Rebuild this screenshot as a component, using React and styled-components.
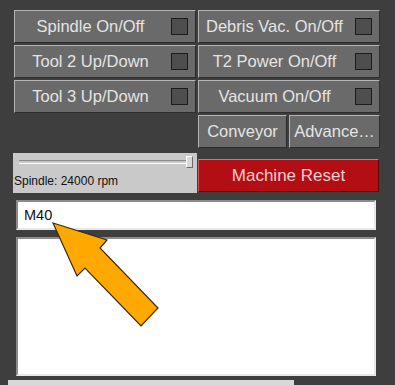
import React from 'react'
import styled, { createGlobalStyle } from 'styled-components'

const GlobalStyle = createGlobalStyle`
  html, body {
    margin: 0;
    padding: 0;
    background: #3e3e3e;
    width: 395px;
    height: 385px;
    overflow: hidden;
  }
`;

const Panel = styled.div`
  position: relative;
  width: 395px;
  height: 385px;
  box-sizing: border-box;
  padding: 10px 0 0 14px;
  background: #3e3e3e;
  font-family: 'Liberation Sans', Arial, sans-serif;
`;

const ButtonGrid = styled.div`
  display: grid;
  grid-template-columns: 182px 182px;
  grid-auto-rows: 33px;
  column-gap: 2px;
  row-gap: 2px;
`;

const Btn = styled.div`
  box-sizing: border-box;
  display: flex;
  align-items: center;
  justify-content: center;
  gap: ${p => (p.$check ? '6px' : '0')};
  padding: 0 ${p => (p.$check ? '7px' : '1px')} 0 1px;
  background: #6a6a6a;
  border: 1px solid;
  border-color: #b4b4b4 #2c2c2c #2c2c2c #b4b4b4;
  color: #e4e4e4;
  font-size: 16.5px;
  white-space: nowrap;
  overflow: hidden;
`;

const BtnLabel = styled.span`
  flex: 1;
  text-align: center;
`;

const Check = styled.span`
  flex: none;
  width: 15px;
  height: 15px;
  background: #4e4e4e;
  border: 1px solid #1c1c1c;
`;

const Spacer = styled.div``;

const SplitRow = styled.div`
  display: grid;
  grid-template-columns: 89px 91px;
  gap: 2px;
`;

const ControlRow = styled.div`
  display: grid;
  grid-template-columns: 184px 181px;
  gap: 1px;
  margin: 5px 0 0 -1px;
  align-items: start;
`;

const SliderBox = styled.div`
  height: 40px;
  background: #c9c9c9;
  position: relative;
  box-sizing: border-box;
  padding-top: 3px;
`;

const Track = styled.div`
  position: relative;
  margin: 4px 6px 0 6px;
  height: 2px;
  border-top: 1px solid #8a8a8a;
  border-bottom: 1px solid #ffffff;
`;

const Thumb = styled.div`
  position: absolute;
  right: -2px;
  top: -5px;
  width: 5px;
  height: 10px;
  background: #d8d8d8;
  border: 1px solid;
  border-color: #fff #6a6a6a #6a6a6a #fff;
`;

const SliderLabel = styled.div`
  margin: 10px 0 0 1px;
  font-size: 12px;
  color: #111;
`;

const ResetBtn = styled.div`
  box-sizing: border-box;
  height: 33px;
  margin-top: 6px;
  background: #b20e14;
  border: 1px solid;
  border-color: #e07070 #4a0a0a #4a0a0a #d05050;
  color: #f3cfcf;
  font-size: 17px;
  display: flex;
  align-items: center;
  justify-content: center;
`;

const Field = styled.div`
  box-sizing: border-box;
  width: 360px;
  margin: 7px 0 0 2px;
  background: #ffffff;
  border: 2px solid;
  border-color: #8c8c8c #e8e8e8 #e8e8e8 #8c8c8c;
  color: #111;
  font-size: 14.5px;
  height: ${p => p.$h}px;
  padding: 5px 0 0 6px;
`;

const Scrollbar = styled.div`
  position: absolute;
  left: 8px;
  bottom: 0;
  width: 286px;
  height: 5px;
  background: #d8d8d8;
`;

const ArrowLayer = styled.svg`
  position: absolute;
  left: 0;
  top: 0;
  pointer-events: none;
`;

const buttons = [
  'Spindle On/Off',
  'Debris Vac. On/Off',
  'Tool 2 Up/Down',
  'T2 Power On/Off',
  'Tool 3 Up/Down',
  'Vacuum On/Off',
];

export default function App() {
  return (
    <Panel>
      <GlobalStyle />
      <ButtonGrid>
        {buttons.map(label => (
          <Btn key={label} $check>
            <BtnLabel>{label}</BtnLabel>
            <Check />
          </Btn>
        ))}
        <Spacer />
        <SplitRow>
          <Btn><BtnLabel>Conveyor</BtnLabel></Btn>
          <Btn><BtnLabel>Advance…</BtnLabel></Btn>
        </SplitRow>
      </ButtonGrid>
      <ControlRow>
        <SliderBox>
          <Track>
            <Thumb />
          </Track>
          <SliderLabel>Spindle: 24000 rpm</SliderLabel>
        </SliderBox>
        <ResetBtn>Machine Reset</ResetBtn>
      </ControlRow>
      <Field $h={30}>M40</Field>
      <Field $h={139} />
      <Scrollbar />
      <ArrowLayer width="395" height="385" viewBox="0 0 395 385">
        <polygon
          points="53,223 107,240 100,248 158,308 141,326 85,268 77,276"
          fill="#ffa800"
          stroke="#3a2a00"
          strokeWidth="1.2"
          strokeLinejoin="miter"
        />
      </ArrowLayer>
    </Panel>
  )
}
